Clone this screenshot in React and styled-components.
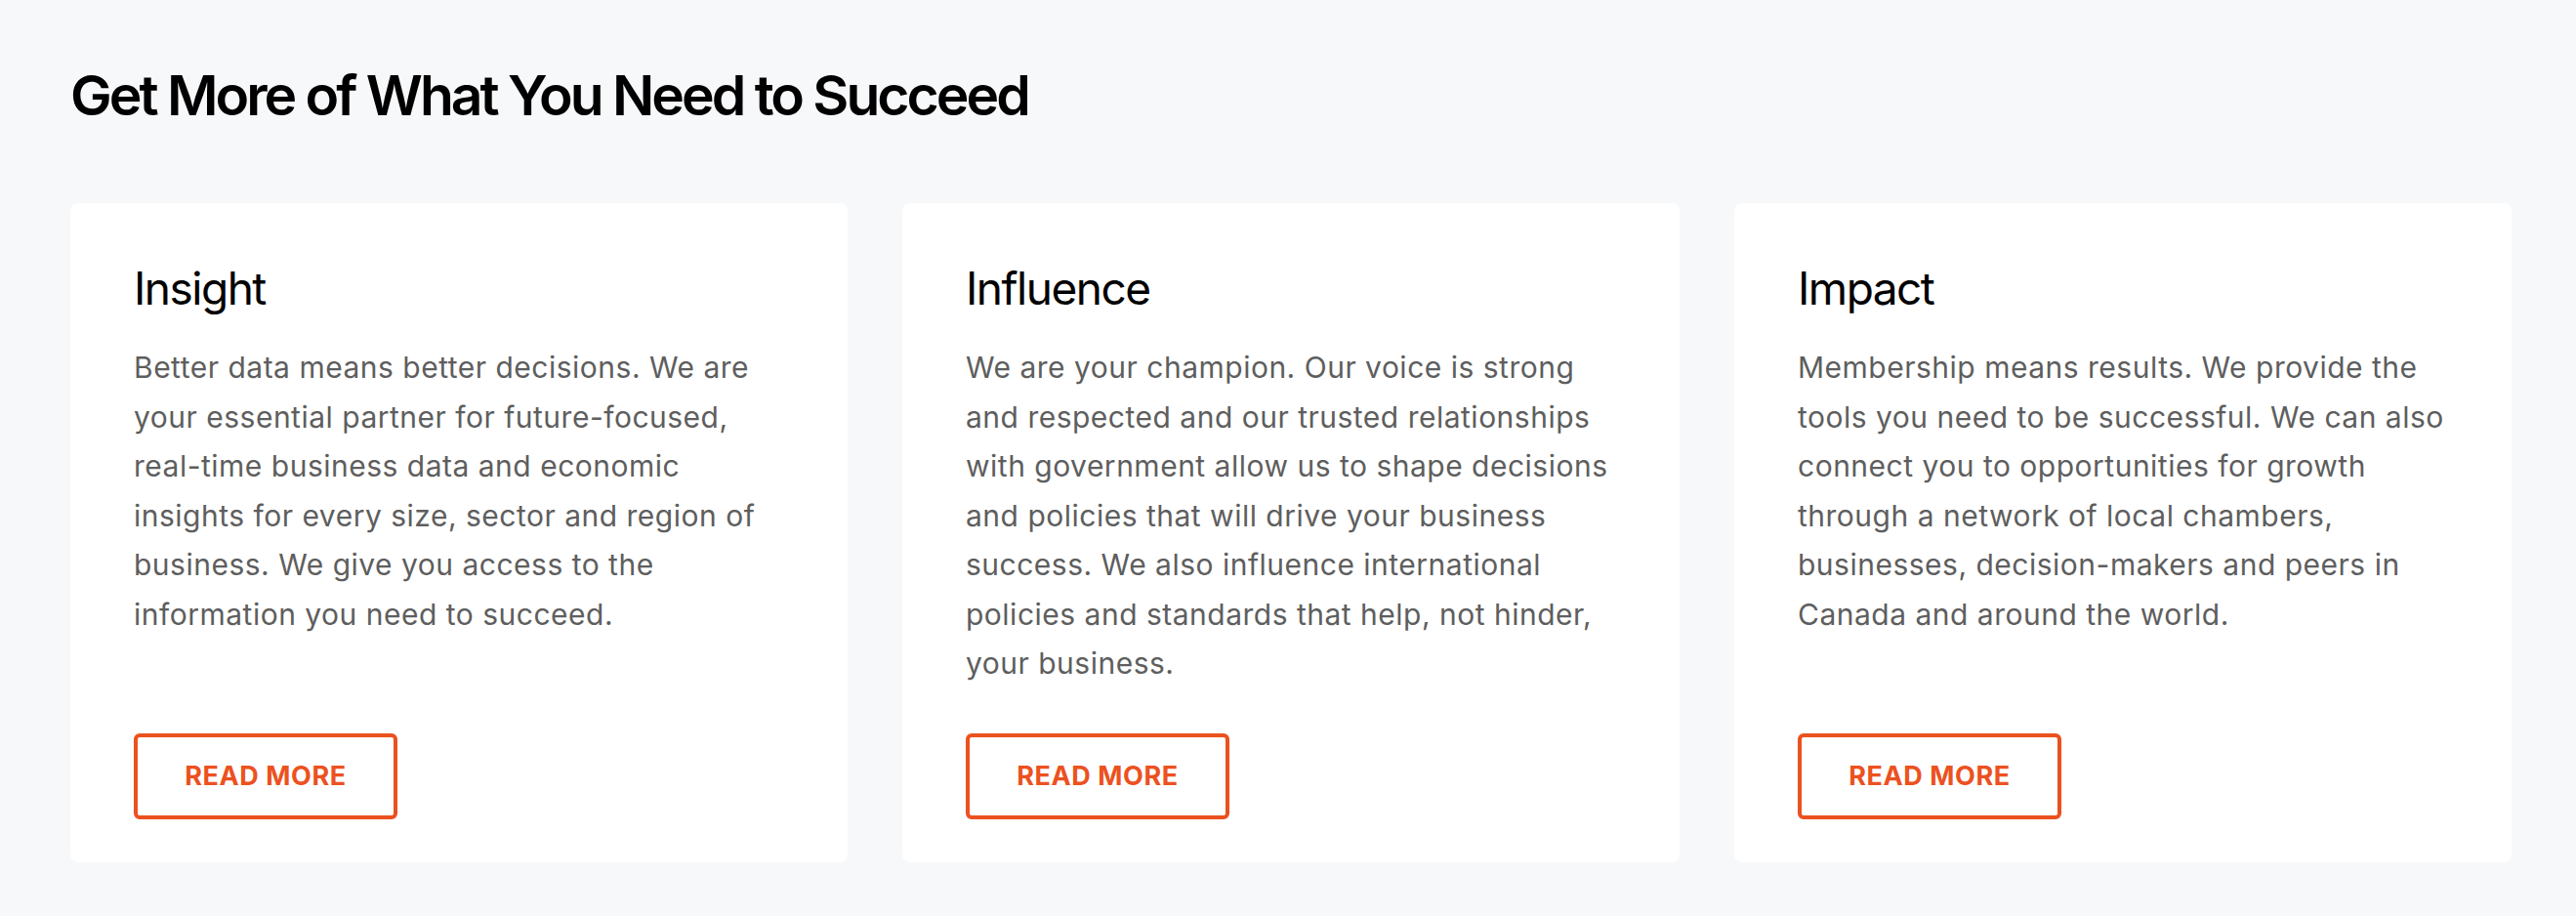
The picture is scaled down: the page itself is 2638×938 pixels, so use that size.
import styled, { createGlobalStyle } from "styled-components";

const COLORS = {
  page: "#f7f8fa",
  card: "#ffffff",
  heading: "#000000",
  body: "#5e5e5e",
  accent: "#ec5120",
};

const GlobalStyle = createGlobalStyle`
  html, body {
    margin: 0;
    padding: 0;
    background: ${COLORS.page};
    font-family: "Inter", "Liberation Sans", sans-serif;
  }
`;

const Section = styled.section`
  padding: 63px 66px 56px 72px;
  background: ${COLORS.page};
`;

const Heading = styled.h2`
  margin: 0 0 75px;
  font-size: 57px;
  line-height: 70px;
  font-weight: 600;
  letter-spacing: -3px;
  color: ${COLORS.heading};
`;

const Grid = styled.div`
  display: grid;
  grid-template-columns: repeat(3, 1fr);
  gap: 56px;
`;

const Card = styled.article`
  display: flex;
  flex-direction: column;
  align-items: flex-start;
  background: ${COLORS.card};
  border-radius: 8px;
  padding: 58px 65px 44px;
`;

const Title = styled.h3`
  margin: 0 0 27px;
  font-size: 46px;
  line-height: 58px;
  font-weight: 400;
  letter-spacing: -1.5px;
  color: ${COLORS.heading};
`;

const Text = styled.p`
  margin: 0 0 46px;
  font-size: 30px;
  line-height: 50.5px;
  letter-spacing: 0.5px;
  color: ${COLORS.body};
`;

const Button = styled.a`
  margin-top: auto;
  display: inline-flex;
  align-items: center;
  justify-content: center;
  box-sizing: border-box;
  width: 270px;
  height: 88px;
  border: 4px solid ${COLORS.accent};
  border-radius: 6px;
  color: ${COLORS.accent};
  font-size: 27px;
  font-weight: 700;
  letter-spacing: 0.6px;
  text-decoration: none;
  cursor: pointer;
`;

const CARDS = [
  {
    title: "Insight",
    text: "Better data means better decisions. We are your essential partner for future-focused, real-time business data and economic insights for every size, sector and region of business. We give you access to the information you need to succeed.",
  },
  {
    title: "Influence",
    text: "We are your champion. Our voice is strong and respected and our trusted relationships with government allow us to shape decisions and policies that will drive your business success. We also influence international policies and standards that help, not hinder, your business.",
  },
  {
    title: "Impact",
    text: "Membership means results. We provide the tools you need to be successful. We can also connect you to opportunities for growth through a network of local chambers, businesses, decision-makers and peers in Canada and around the world.",
  },
];

const App = () => (
  <>
    <GlobalStyle />
    <Section>
      <Heading>Get More of What You Need to Succeed</Heading>
      <Grid>
        {CARDS.map((card) => (
          <Card key={card.title}>
            <Title>{card.title}</Title>
            <Text>{card.text}</Text>
            <Button href="#">READ MORE</Button>
          </Card>
        ))}
      </Grid>
    </Section>
  </>
);

export default App;
